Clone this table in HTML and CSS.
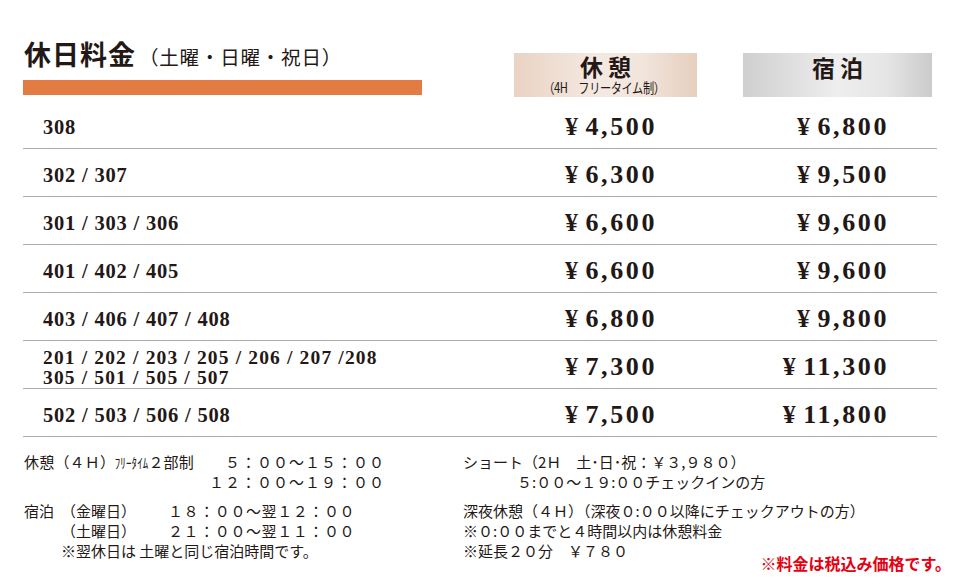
FILE: index.html
```html
<!DOCTYPE html>
<html lang="ja">
<head>
<meta charset="utf-8">
<title>休日料金</title>
<link rel="stylesheet" href="styles.css">
</head>
<body>
<div class="page">
  <div class="head">
    <div class="title-block">
      <h1 class="title">休日料金<span class="sub">（土曜・日曜・祝日）</span></h1>
      <div class="bar"></div>
    </div>
    <div class="col-head rest">
      <div class="col-name">休憩</div>
      <div class="col-note">（4H　フリータイム制）</div>
    </div>
    <div></div>
    <div class="col-head stay">
      <div class="col-name">宿泊</div>
    </div>
  </div>

  <div class="table">
    <div class="row"><div class="room">308</div><div class="price"><span class="yen">¥</span>4,500</div><div class="price"><span class="yen">¥</span>6,800</div><div></div></div>
    <div class="row"><div class="room">302 / 307</div><div class="price"><span class="yen">¥</span>6,300</div><div class="price"><span class="yen">¥</span>9,500</div><div></div></div>
    <div class="row"><div class="room">301 / 303 / 306</div><div class="price"><span class="yen">¥</span>6,600</div><div class="price"><span class="yen">¥</span>9,600</div><div></div></div>
    <div class="row"><div class="room">401 / 402 / 405</div><div class="price"><span class="yen">¥</span>6,600</div><div class="price"><span class="yen">¥</span>9,600</div><div></div></div>
    <div class="row"><div class="room">403 / 406 / 407 / 408</div><div class="price"><span class="yen">¥</span>6,800</div><div class="price"><span class="yen">¥</span>9,800</div><div></div></div>
    <div class="row"><div class="room two">201 / 202 / 203 / 205 / 206 / 207 /208<br>305 / 501 / 505 / 507</div><div class="price"><span class="yen">¥</span>7,300</div><div class="price"><span class="yen">¥</span>11,300</div><div></div></div>
    <div class="row"><div class="room">502 / 503 / 506 / 508</div><div class="price"><span class="yen">¥</span>7,500</div><div class="price"><span class="yen">¥</span>11,800</div><div></div></div>
  </div>

  <div class="notes">
    <div class="notes-left">
      <div class="group">
        <div class="nl"><span class="lbl-rest">休憩（４Ｈ）<span class="half">ﾌﾘｰﾀｲﾑ</span>２部制</span><span class="time">５：００～１５：００</span></div>
        <div class="nl"><span class="lbl-rest"></span><span class="time">１２：００～１９：００</span></div>
      </div>
      <div class="group">
        <div class="nl"><span class="lbl-a">宿泊</span><span class="lbl-b">（金曜日）</span><span class="time2">１８：００～翌１２：００</span></div>
        <div class="nl"><span class="lbl-a"></span><span class="lbl-b">（土曜日）</span><span class="time2">２１：００～翌１１：００</span></div>
        <div class="nl"><span class="lbl-a"></span><span>※翌休日は 土曜と同じ宿泊時間です。</span></div>
      </div>
    </div>
    <div class="notes-right">
      <div class="group">
        <div class="nl">ショート（2Ｈ　土･日･祝：￥３,９８０）</div>
        <div class="nl indent">５:００～１９:００チェックインの方</div>
      </div>
      <div class="group">
        <div class="nl">深夜休憩（４Ｈ）（深夜０:００以降にチェックアウトの方）</div>
        <div class="nl">※０:００までと４時間以内は休憩料金</div>
        <div class="nl">※延長２０分　￥７８０</div>
      </div>
      <div class="tax">※料金は税込み価格です。</div>
    </div>
  </div>
</div>
</body>
</html>
```

FILE: styles.css
```css
* { box-sizing: border-box; }
html, body { margin: 0; padding: 0; background: #fff; }
body {
  font-family: "Noto Sans CJK JP", "Noto Sans", sans-serif;
  color: #231815;
}
.page {
  width: 960px;
  height: 587px;
  padding: 38px 23px 0 23px;
  overflow: hidden;
}
.head {
  display: grid;
  grid-template-columns: 491px 183px 46px 189px;
  align-items: end;
}
.title-block { padding-left: 1px; }
.title {
  margin: 0;
  font-size: 27px;
  font-weight: 700;
  line-height: 32px;
  letter-spacing: 1px;
}
.sub {
  font-size: 19.5px;
  font-weight: 400;
  letter-spacing: 0.8px;
  margin-left: 3px;
}
.bar {
  width: 399px;
  height: 15px;
  background: #e37c42;
  margin-top: 7px;
  margin-bottom: 2px;
  margin-left: -1px;
}
.col-head {
  height: 44px;
  display: flex;
  flex-direction: column;
  align-items: center;
  justify-content: flex-start;
}
.rest {
  background: linear-gradient(90deg, #e9d3c4 0%, #f4e9e2 45%, #f2e5dc 70%, #e6cfbe 100%);
}
.stay {
  background: linear-gradient(90deg, #cfcfcf 0%, #eeeeee 50%, #e6e6e6 75%, #cbcbcb 100%);
  padding-top: 1px;
}
.col-name {
  font-size: 23px;
  font-weight: 700;
  letter-spacing: 5px;
  padding-left: 5px;
  line-height: 27px;
}
.col-note {
  font-size: 14px;
  line-height: 15px;
  transform: scaleX(0.8);
  margin-left: -4px;
  letter-spacing: -0.5px;
  white-space: nowrap;
}
.table { margin-top: 4px; }
.row {
  display: grid;
  grid-template-columns: 1fr 140px 232px 50px;
  align-items: center;
  height: 48px;
  padding-top: 5px;
  border-bottom: 1.5px solid #acacac;
}
.room {
  padding-left: 20px;
  font-family: "Liberation Serif", serif;
  font-weight: 700;
  font-size: 20.5px;
  letter-spacing: 0.8px;
  line-height: 22px;
}
.room.two {
  font-size: 19.5px;
  line-height: 20px;
  letter-spacing: 1.15px;
  padding-top: 1px;
}
.price {
  text-align: right;
  font-family: "Liberation Serif", serif;
  font-weight: 700;
  font-size: 26px;
  letter-spacing: 2.6px;
  line-height: 26px;
  margin-right: -2px;
}
.yen { margin-right: 5px; font-size: 26px; }
.notes {
  display: flex;
  margin-top: 15px;
  font-size: 15px;
  line-height: 20px;
}
.notes-left { width: 440px; padding-left: 1px; }
.notes-right { flex: 1; position: relative; }
.group { margin-bottom: 9px; }
.nl { display: flex; white-space: nowrap; }
.lbl-rest { width: 185px; letter-spacing: 0.2px; }
.half { display: inline-block; font-size: 14px; transform: scaleX(0.78); margin: 0 -5px; }
.time { width: 176px; text-align: right; letter-spacing: 1px; }
.lbl-a { width: 37px; }
.lbl-b { width: 107px; }
.time2 { letter-spacing: 0.6px; }
.indent { padding-left: 54px; }
.tax {
  position: absolute;
  right: -14px;
  bottom: -3px;
  color: #e60012;
  font-weight: 700;
  font-size: 16px;
}
```
